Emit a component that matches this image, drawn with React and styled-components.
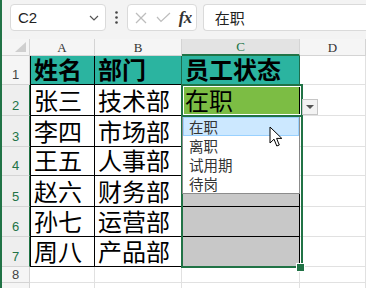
import React from "react";
import styled, { createGlobalStyle } from "styled-components";

const GlobalStyle = createGlobalStyle`
  html, body { margin: 0; padding: 0; background: #ffffff; overflow: hidden; }
  * { box-sizing: border-box; }
`;

const GREEN = "#217346";
const GRID = "#e1e1e1";
const HEAD_LINE = "#d4d4d4";

const Frame = styled.div`
  width: 366px;
  height: 288px;
  border-left: 2px solid ${GREEN};
  background: #ffffff;
  display: flex;
  flex-direction: column;
  overflow: hidden;
`;

const Toolbar = styled.div`
  height: 39px;
  flex: none;
  background: #f3f3f3;
  display: flex;
  align-items: flex-start;
  padding: 4px 0 0 8px;
  font-family: "Liberation Sans", "Noto Sans CJK SC", sans-serif;
`;

const Box = styled.div`
  height: 27px;
  background: #ffffff;
  border: 1px solid #dadada;
  border-radius: 4px;
  display: flex;
  align-items: center;
`;

const NameBox = styled(Box)`
  width: 100px;
  padding: 0 6px 0 7px;
  justify-content: space-between;
  font-size: 15px;
  color: #222;
`;

const Dots = styled.div`
  width: 22px;
  height: 27px;
  display: flex;
  align-items: center;
  justify-content: center;
`;

const FxBox = styled(Box)`
  width: 72px;
  padding: 0 4px 0 7px;
  justify-content: space-between;
`;

const FxLabel = styled.span`
  font-family: "Liberation Serif", serif;
  font-style: italic;
  font-weight: bold;
  font-size: 17px;
  color: #333;
  letter-spacing: -0.5px;
`;

const FormulaBox = styled(Box)`
  margin-left: 6px;
  width: 170px;
  padding-left: 11px;
  font-family: "Noto Sans CJK SC", sans-serif;
  font-size: 15px;
  color: #222;
  border-right: none;
  border-radius: 4px 0 0 4px;
`;

const Sheet = styled.div`
  position: relative;
  flex: 1;
  display: grid;
  grid-template-columns: 28px 65px 87px 118px 1fr;
  grid-template-rows: 17px 29px 31px 31px 29px 31px 30px 30px 16px 16px;
`;

const Corner = styled.div`
  background: #f5f5f5;
  border-right: 1px solid ${HEAD_LINE};
  border-bottom: 1px solid ${HEAD_LINE};
  display: flex;
  align-items: flex-end;
  justify-content: flex-end;
  padding: 0 3px 3px 0;
`;

const ColHead = styled.div`
  background: ${(p) => (p.$active ? "#e3e3e3" : "#f5f5f5")};
  border-right: 1px solid ${HEAD_LINE};
  border-bottom: ${(p) => (p.$active ? `2px solid ${GREEN}` : `1px solid ${HEAD_LINE}`)};
  color: ${(p) => (p.$active ? GREEN : "#333")};
  font-family: "Liberation Serif", serif;
  font-size: 13px;
  line-height: 13px;
  display: flex;
  align-items: center;
  justify-content: center;
`;

const RowHead = styled.div`
  background: ${(p) => (p.$active ? "#eeeeee" : "#f5f5f5")};
  border-right: 1px solid ${(p) => (p.$active ? GREEN : HEAD_LINE)};
  border-bottom: 1px solid ${HEAD_LINE};
  color: ${(p) => (p.$active ? GREEN : "#444")};
  font-family: "Liberation Sans", sans-serif;
  font-size: 13px;
  line-height: 13px;
  display: flex;
  align-items: flex-end;
  justify-content: center;
  padding-bottom: ${(p) => (p.$small ? 1 : 3)}px;
`;

const Cell = styled.div`
  background: ${(p) => p.$bg || "#ffffff"};
  border-left: ${(p) => (p.$left ? `1px solid ${p.$left}` : "none")};
  border-right: 1px solid ${(p) => p.$right || GRID};
  border-bottom: 1px solid ${(p) => p.$bottom || GRID};
  font-family: "Noto Sans CJK SC", sans-serif;
  font-size: 24px;
  font-weight: ${(p) => (p.$bold ? 700 : 400)};
  color: #000;
  line-height: 24px;
  white-space: nowrap;
  display: flex;
  align-items: flex-end;
  padding: 0 0 3px 3px;
`;

const Selection = styled.div`
  position: absolute;
  left: 179px;
  top: 45px;
  width: 122px;
  height: 184px;
  border: 2px solid ${GREEN};
  pointer-events: none;
`;

const ActiveCell = styled.div`
  position: absolute;
  left: 179px;
  top: 45px;
  width: 122px;
  height: 33px;
  border: 2px solid ${GREEN};
  box-shadow: inset 0 0 0 1px #ffffff;
`;

const FillHandle = styled.div`
  position: absolute;
  left: 295px;
  top: 225px;
  width: 7px;
  height: 7px;
  background: ${GREEN};
  box-shadow: 0 0 0 1px #ffffff;
`;

const ArrowButton = styled.div`
  position: absolute;
  left: 300px;
  top: 60px;
  width: 16px;
  height: 16px;
  background: #f3f3f3;
  border: 1px solid #c6c6c6;
  display: flex;
  align-items: center;
  justify-content: center;
`;

const Triangle = styled.div`
  width: 0;
  height: 0;
  border-left: 4px solid transparent;
  border-right: 4px solid transparent;
  border-top: 4px solid #555;
`;

const DropList = styled.div`
  position: absolute;
  left: 180px;
  top: 78px;
  width: 118px;
  height: 77px;
  background: #ffffff;
  border: 1px solid #8c8c8c;
  border-top: none;
  display: flex;
  flex-direction: column;
`;

const DropItem = styled.div`
  height: 19px;
  flex: none;
  padding-left: 5px;
  font-family: "Noto Sans CJK SC", sans-serif;
  font-size: 14.5px;
  line-height: 17px;
  color: #333;
  display: flex;
  align-items: center;
  background: ${(p) => (p.$hover ? "#cce8ff" : "transparent")};
  border: 1px solid ${(p) => (p.$hover ? "#99d1ff" : "transparent")};
`;

const Cursor = styled.svg`
  position: absolute;
  left: 267px;
  top: 87px;
`;

const rows = [
  { n: 1, a: "姓名", b: "部门", c: "员工状态", head: true },
  { n: 2, a: "张三", b: "技术部", c: "在职", cbg: "#7cbd44" },
  { n: 3, a: "李四", b: "市场部", c: "" },
  { n: 4, a: "王五", b: "人事部", c: "" },
  { n: 5, a: "赵六", b: "财务部", c: "", cbg: "#c8c8c8" },
  { n: 6, a: "孙七", b: "运营部", c: "", cbg: "#c8c8c8" },
  { n: 7, a: "周八", b: "产品部", c: "", cbg: "#c8c8c8" },
];

const TEAL = "#2bb4a0";

export default function App() {
  return (
    <>
      <GlobalStyle />
      <Frame>
        <Toolbar>
          <NameBox>
            <span>C2</span>
            <svg width="10" height="6" viewBox="0 0 10 6">
              <polyline points="1,1 5,5 9,1" fill="none" stroke="#555" strokeWidth="1.2" />
            </svg>
          </NameBox>
          <Dots>
            <svg width="3" height="13" viewBox="0 0 3 13">
              <circle cx="1.5" cy="1.5" r="1.3" fill="#444" />
              <circle cx="1.5" cy="6.5" r="1.3" fill="#444" />
              <circle cx="1.5" cy="11.5" r="1.3" fill="#444" />
            </svg>
          </Dots>
          <FxBox>
            <svg width="12" height="12" viewBox="0 0 12 12">
              <line x1="1" y1="1" x2="11" y2="11" stroke="#bdbdbd" strokeWidth="1.2" />
              <line x1="11" y1="1" x2="1" y2="11" stroke="#bdbdbd" strokeWidth="1.2" />
            </svg>
            <svg width="15" height="11" viewBox="0 0 15 11">
              <polyline points="1,5 5,9.5 14,1" fill="none" stroke="#bdbdbd" strokeWidth="1.2" />
            </svg>
            <FxLabel>fx</FxLabel>
          </FxBox>
          <FormulaBox>在职</FormulaBox>
        </Toolbar>
        <Sheet>
          <Corner>
            <svg width="11" height="10" viewBox="0 0 11 10">
              <polygon points="11,0 11,10 0,10" fill="#cfcfcf" />
            </svg>
          </Corner>
          <ColHead>A</ColHead>
          <ColHead>B</ColHead>
          <ColHead $active>C</ColHead>
          <ColHead>D</ColHead>

          {rows.map((r) => (
            <React.Fragment key={r.n}>
              <RowHead $active={!r.head}>{r.n}</RowHead>
              <Cell $left="#000" $right="#000" $bottom="#000" $bg={r.head ? TEAL : undefined} $bold={r.head}>
                {r.a}
              </Cell>
              <Cell $right={r.head ? "#1d6e4f" : "#000"} $bottom="#000" $bg={r.head ? TEAL : undefined} $bold={r.head}>
                {r.b}
              </Cell>
              <Cell
                $right={r.head ? "#1d6e4f" : "#000"}
                $bottom="#000"
                $bg={r.head ? TEAL : r.cbg}
                $bold={r.head}
              >
                {r.c}
              </Cell>
              <Cell />
            </React.Fragment>
          ))}

          {["8", ""].map((n, i) => (
            <React.Fragment key={i}>
              <RowHead $small>{n}</RowHead>
              <Cell />
              <Cell />
              <Cell />
              <Cell />
            </React.Fragment>
          ))}

          <Selection />
          <ActiveCell />
          <FillHandle />
          <ArrowButton>
            <Triangle />
          </ArrowButton>
          <DropList>
            <DropItem $hover>在职</DropItem>
            <DropItem>离职</DropItem>
            <DropItem>试用期</DropItem>
            <DropItem>待岗</DropItem>
          </DropList>
          <Cursor width="14" height="22" viewBox="0 0 14 22">
            <path
              d="M1 1 L1 17 L5 13.2 L7.8 20 L10.3 19 L7.6 12.4 L12.8 12.4 Z"
              fill="#ffffff"
              stroke="#000"
              strokeWidth="1"
              strokeLinejoin="round"
            />
          </Cursor>
        </Sheet>
      </Frame>
    </>
  );
}
